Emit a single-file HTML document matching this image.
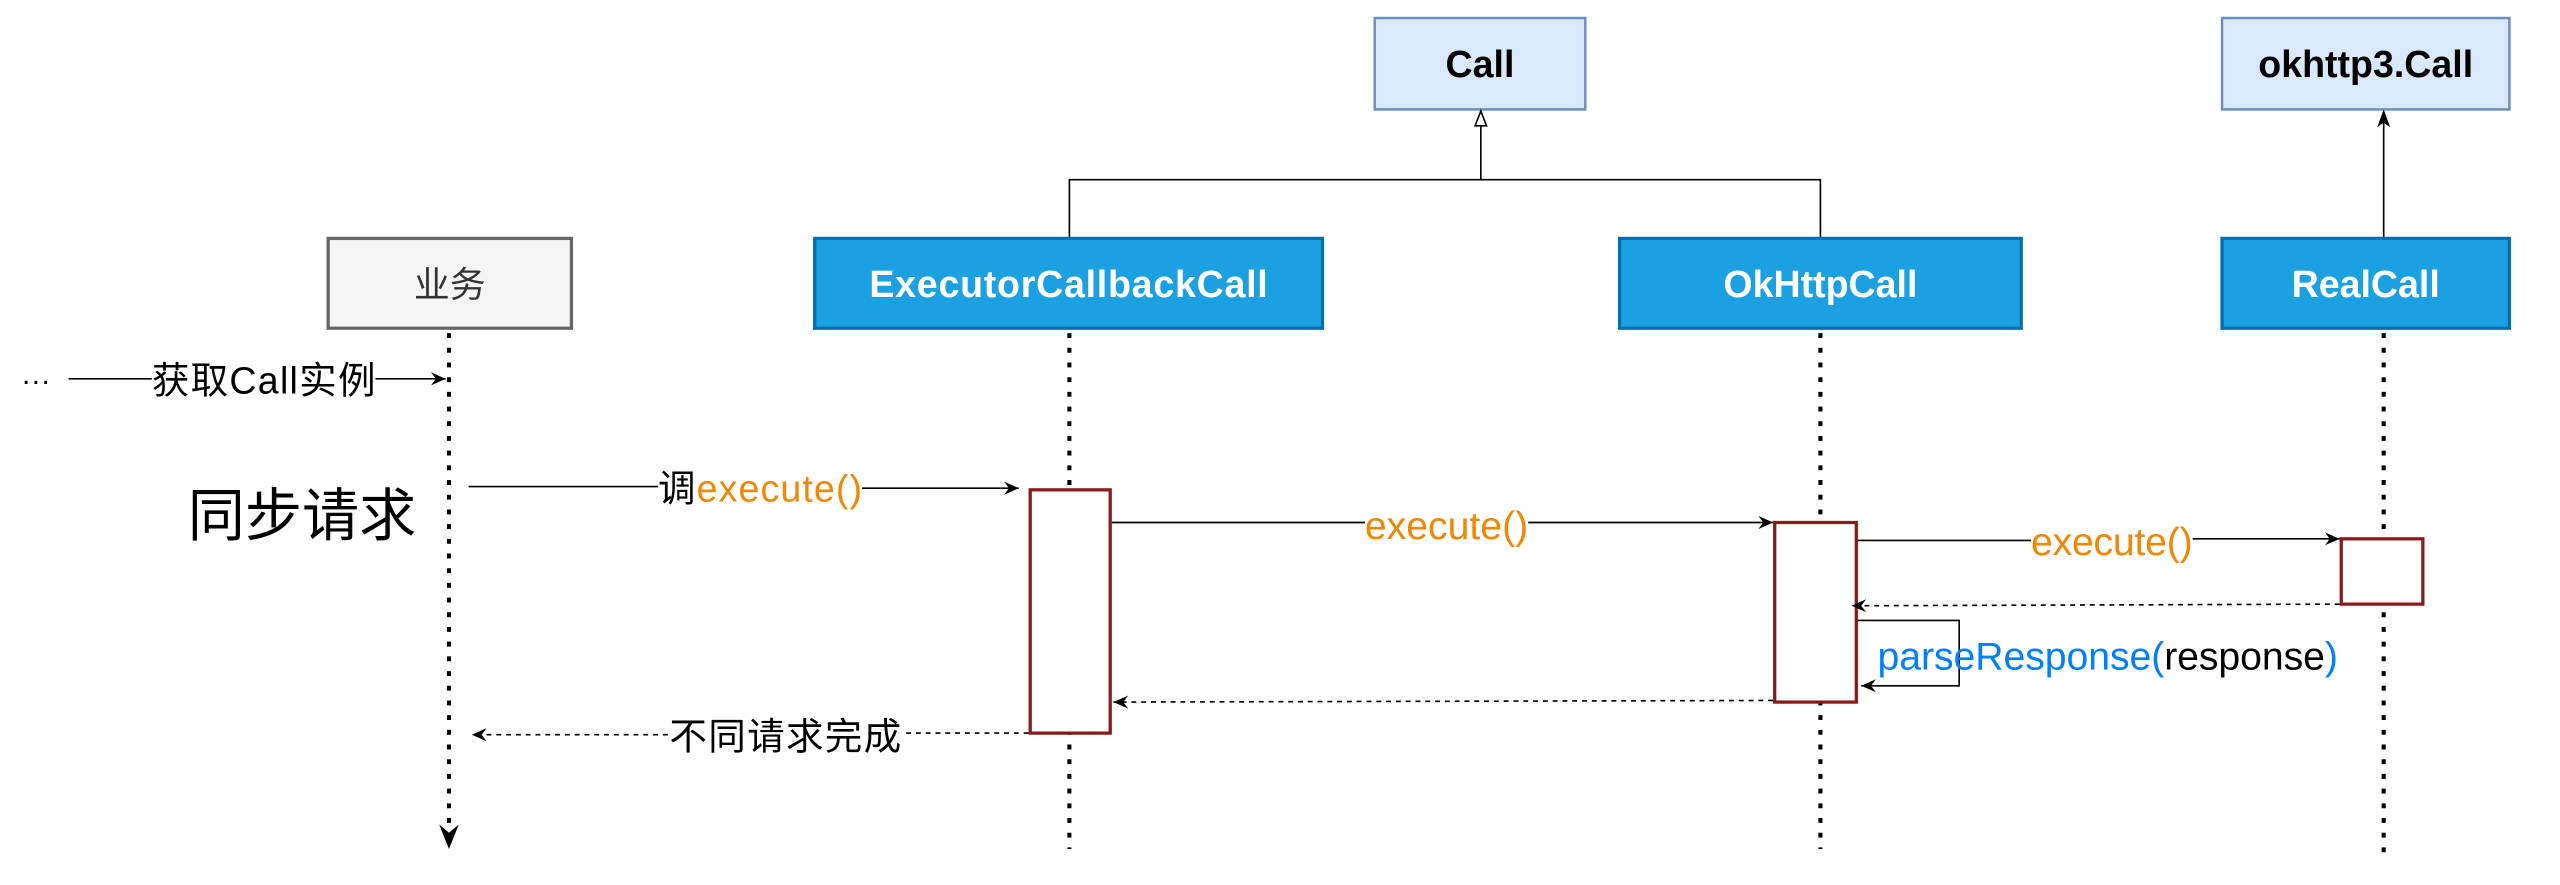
<!DOCTYPE html>
<html><head><meta charset="utf-8"><style>
html,body{margin:0;padding:0;background:#fff;}
svg{display:block;}
text{font-family:"Liberation Sans","Noto Sans CJK SC",sans-serif;}
</style></head><body>
<svg width="2560" height="885" viewBox="0 0 1568 542" xmlns="http://www.w3.org/2000/svg">
<defs>
<marker id="ah" markerWidth="10" markerHeight="10" refX="9" refY="5" orient="auto" markerUnits="userSpaceOnUse"><path d="M0,1 L9,5 L0,9 L3,5 Z" fill="#000"/></marker>
</defs>
<rect width="1568" height="542" fill="#fff"/>
<rect x="842" y="11" width="129" height="56" fill="#dae8fc" stroke="#6c8ebf" stroke-width="1.5"/>
<text x="906.5" y="47" font-size="23" font-weight="bold" text-anchor="middle">Call</text>
<rect x="1361" y="11" width="176" height="56" fill="#dae8fc" stroke="#6c8ebf" stroke-width="1.5"/>
<text x="1449" y="47" font-size="23" font-weight="bold" text-anchor="middle">okhttp3.Call</text>
<path d="M655,146 V110 H1115 V146" fill="none" stroke="#000" stroke-width="1"/>
<line x1="907" y1="110" x2="907" y2="76" stroke="#000" stroke-width="1"/>
<path d="M907,68 L910.5,77 L903.5,77 Z" fill="#fff" stroke="#000" stroke-width="1"/>
<line x1="1460" y1="146" x2="1460" y2="72" stroke="#000" stroke-width="1"/>
<path d="M1460,67 L1464,78 L1460,75 L1456,78 Z" fill="#000"/>
<rect x="201" y="146" width="149" height="55" fill="#f5f5f5" stroke="#666" stroke-width="2"/>
<text x="275.5" y="182" font-size="22" text-anchor="middle" fill="#333">业务</text>
<rect x="499" y="146" width="311" height="55" fill="#1ba1e2" stroke="#006eaf" stroke-width="2"/>
<text x="654.5" y="182" font-size="23" font-weight="bold" fill="#fff" text-anchor="middle" textLength="244">ExecutorCallbackCall</text>
<rect x="992" y="146" width="246" height="55" fill="#1ba1e2" stroke="#006eaf" stroke-width="2"/>
<text x="1115" y="182" font-size="23" font-weight="bold" fill="#fff" text-anchor="middle">OkHttpCall</text>
<rect x="1361" y="146" width="176" height="55" fill="#1ba1e2" stroke="#006eaf" stroke-width="2"/>
<text x="1449" y="182" font-size="23" font-weight="bold" fill="#fff" text-anchor="middle">RealCall</text>
<g stroke="#000" stroke-width="2.5" stroke-dasharray="3 6" fill="none">
<line x1="275" y1="204" x2="275" y2="508"/>
<line x1="655" y1="204" x2="655" y2="520"/>
<line x1="1115" y1="204" x2="1115" y2="520"/>
<line x1="1460" y1="204" x2="1460" y2="526"/>
</g>
<path d="M269,505 L275,520 L281,505 L275,510 Z" fill="#000"/>
<text x="13" y="239" font-size="18">···</text>
<line x1="42" y1="232" x2="93" y2="232" stroke="#000" stroke-width="1"/>
<text x="93" y="241" font-size="23" textLength="137">获取Call实例</text>
<line x1="230" y1="232" x2="273" y2="232" stroke="#000" stroke-width="1" marker-end="url(#ah)"/>
<text x="115" y="328" font-size="35">同步请求</text>
<line x1="287" y1="298" x2="403" y2="298" stroke="#000" stroke-width="1"/>
<text x="403" y="307" font-size="23" textLength="125">调<tspan fill="#f08705">execute()</tspan></text>
<line x1="528" y1="299" x2="624" y2="299" stroke="#000" stroke-width="1" marker-end="url(#ah)"/>
<rect x="631" y="300" width="49" height="149" fill="#fff" stroke="#8b1a1a" stroke-width="2"/>
<rect x="1087" y="320" width="50" height="110" fill="#fff" stroke="#8b1a1a" stroke-width="2"/>
<rect x="1434" y="330" width="50" height="40" fill="#fff" stroke="#8b1a1a" stroke-width="2"/>
<line x1="681" y1="320" x2="836" y2="320" stroke="#000" stroke-width="1"/>
<text x="836" y="330" font-size="24" fill="#f08705" textLength="100">execute()</text>
<line x1="936" y1="320" x2="1086" y2="320" stroke="#000" stroke-width="1" marker-end="url(#ah)"/>
<line x1="1138" y1="331" x2="1244" y2="331" stroke="#000" stroke-width="1"/>
<text x="1244" y="340" font-size="24" fill="#f08705" textLength="99">execute()</text>
<line x1="1343" y1="330" x2="1433" y2="330" stroke="#000" stroke-width="1" marker-end="url(#ah)"/>
<g stroke="#000" stroke-width="1" stroke-dasharray="3 3" fill="none">
<line x1="1433" y1="370" x2="1134" y2="371" marker-end="url(#ah)"/>
<line x1="1086" y1="429" x2="682" y2="430" marker-end="url(#ah)"/>
<line x1="630" y1="449" x2="553" y2="449"/>
<line x1="409" y1="450" x2="289" y2="450" marker-end="url(#ah)"/>
</g>
<text x="410" y="459" font-size="23" textLength="142">不同请求完成</text>
<path d="M1138,380 H1200 V420 H1140" fill="none" stroke="#000" stroke-width="1" marker-end="url(#ah)"/>
<text x="1150" y="410" font-size="24" fill="#007fff" textLength="282">parseResponse(<tspan fill="#000">response</tspan>)</text>
</svg>
</body></html>
